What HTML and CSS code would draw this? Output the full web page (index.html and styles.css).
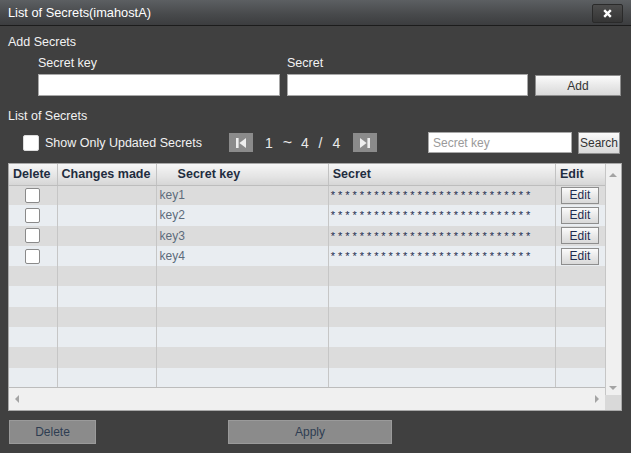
FILE: index.html
```html
<!DOCTYPE html>
<html lang="en">

<head>
    <meta charset="UTF-8">
    <title>List of Secrets</title>
    <link rel="stylesheet" href="styles.css">
</head>

<body>
    <div class="dialog">
        <div class="titlebar">
            <span class="title">List of Secrets(imahostA)</span>
            <button class="close" type="button">
                <svg width="9" height="9" viewBox="0 0 9 9"><path d="M1.2 1.2 L7.8 7.8 M7.8 1.2 L1.2 7.8" stroke="#fff" stroke-width="2.4" /></svg>
            </button>
        </div>

        <div class="content">
            <div class="section-title">Add Secrets</div>
            <div class="add-grid">
                <label class="field-label">Secret key</label>
                <label class="field-label">Secret</label>
                <span></span>
                <input class="text-input" type="text">
                <input class="text-input" type="text">
                <button class="light-btn add-btn" type="button">Add</button>
            </div>

            <div class="section-title list-title">List of Secrets</div>
            <div class="toolbar">
                <label class="show-updated">
                    <input class="chk big" type="checkbox">
                    <span>Show Only Updated Secrets</span>
                </label>
                <button class="page-btn" type="button">
                    <svg width="10" height="10" viewBox="0 0 10 10"><rect x="0" y="0" width="2.6" height="10" fill="#eee" /><polygon points="10,0 3.4,5 10,10" fill="#eee" /></svg>
                </button>
                <span class="page-num">1 <span class="tilde">~</span> 4 / 4</span>
                <button class="page-btn" type="button">
                    <svg width="10" height="10" viewBox="0 0 10 10"><polygon points="0,0 6.6,5 0,10" fill="#eee" /><rect x="7.4" y="0" width="2.6" height="10" fill="#eee" /></svg>
                </button>
                <div class="search">
                    <input class="text-input search-input" type="text" placeholder="Secret key">
                    <button class="light-btn search-btn" type="button">Search</button>
                </div>
            </div>

            <div class="grid-wrap">
                <div class="grid-body">
                    <table class="grid">
                        <colgroup>
                            <col style="width: 48px">
                            <col style="width: 99px">
                            <col style="width: 172px">
                            <col style="width: 227px">
                            <col style="width: 50px">
                        </colgroup>
                        <thead>
                            <tr>
                                <th>Delete</th>
                                <th>Changes made</th>
                                <th class="key-head">Secret key</th>
                                <th>Secret</th>
                                <th>Edit</th>
                            </tr>
                        </thead>
                        <tbody>
                            <tr>
                                <td class="c"><input class="chk" type="checkbox"></td>
                                <td></td>
                                <td class="key">key1</td>
                                <td class="secret">****************************</td>
                                <td><button class="light-btn edit-btn" type="button">Edit</button></td>
                            </tr>
                            <tr>
                                <td class="c"><input class="chk" type="checkbox"></td>
                                <td></td>
                                <td class="key">key2</td>
                                <td class="secret">****************************</td>
                                <td><button class="light-btn edit-btn" type="button">Edit</button></td>
                            </tr>
                            <tr>
                                <td class="c"><input class="chk" type="checkbox"></td>
                                <td></td>
                                <td class="key">key3</td>
                                <td class="secret">****************************</td>
                                <td><button class="light-btn edit-btn" type="button">Edit</button></td>
                            </tr>
                            <tr>
                                <td class="c"><input class="chk" type="checkbox"></td>
                                <td></td>
                                <td class="key">key4</td>
                                <td class="secret">****************************</td>
                                <td><button class="light-btn edit-btn" type="button">Edit</button></td>
                            </tr>
                            <tr><td></td><td></td><td></td><td></td><td></td></tr>
                            <tr><td></td><td></td><td></td><td></td><td></td></tr>
                            <tr><td></td><td></td><td></td><td></td><td></td></tr>
                            <tr><td></td><td></td><td></td><td></td><td></td></tr>
                            <tr><td></td><td></td><td></td><td></td><td></td></tr>
                            <tr><td></td><td></td><td></td><td></td><td></td></tr>
                        </tbody>
                    </table>
                </div>
                <div class="vscroll">
                    <span class="arrow up"></span>
                    <span class="arrow down"></span>
                </div>
                <div class="hscroll">
                    <span class="arrow left"></span>
                    <span class="arrow right"></span>
                </div>
                <div class="corner"></div>
            </div>

            <div class="footer">
                <button class="gray-btn delete-btn" type="button">Delete</button>
                <button class="gray-btn apply-btn" type="button">Apply</button>
            </div>
        </div>
    </div>
</body>

</html>
```

FILE: styles.css
```css
* {
    padding: 0;
    margin: 0;
    box-sizing: border-box;
}

body {
    background-color: #fff;
    font-family: "Liberation Sans", Arial, sans-serif;
    font-size: 12px;
}

button,
input {
    font-family: inherit;
    font-size: 12px;
}

.dialog {
    width: 631px;
    height: 453px;
    background-color: #404040;
    display: flex;
    flex-direction: column;
}

/* 标题栏 */
.titlebar {
    height: 26px;
    padding: 0 8px 0 8px;
    background: linear-gradient(#5c5f62, #47494b 60%, #3c3d3f);
    border-bottom: 1px solid #1c1c1c;
    display: flex;
    align-items: center;
    justify-content: space-between;
}

.title {
    color: #fff;
    font-size: 12.8px;
    margin-top: -1px;
}

.close {
    width: 31px;
    height: 19px;
    margin-top: 2px;
    border: 1px solid #2a2a2a;
    border-radius: 2px;
    background: linear-gradient(#4c4c4c, #353535);
    display: flex;
    align-items: center;
    justify-content: center;
}

.content {
    padding: 0 10px 0 8px;
    display: flex;
    flex-direction: column;
}

.section-title {
    height: 20px;
    line-height: 20px;
    margin-top: 6px;
    color: #f2f2f2;
    font-size: 12.5px;
}

.list-title {
    margin-top: 10px;
}

.add-grid {
    display: grid;
    grid-template-columns: 242px 241px 86px;
    grid-template-rows: 18px 22px;
    column-gap: 7px;
    row-gap: 2px;
    padding-left: 30px;
    margin-top: 2px;
}

.field-label {
    color: #f2f2f2;
    line-height: 18px;
    font-size: 12.5px;
}

.text-input {
    height: 22px;
    border: 1px solid #a8a8a8;
    background-color: #fff;
    padding: 0 4px;
    outline: none;
}

.light-btn {
    border: 1px solid #8e8e8e;
    background: linear-gradient(#fbfbfb, #e9e9e9 50%, #d9d9d9);
    color: #333;
}

.add-btn {
    height: 21px;
    margin-top: 1px;
}

/* 工具栏 */
.toolbar {
    height: 23px;
    margin-top: 5px;
    display: flex;
    align-items: center;
}

.show-updated {
    width: 221px;
    padding-left: 15px;
    display: flex;
    align-items: center;
    color: #f2f2f2;
    font-size: 12.5px;
}

.chk {
    appearance: none;
    -webkit-appearance: none;
    width: 15px;
    height: 15px;
    border: 1px solid #8a8a8a;
    border-radius: 2px;
    background-color: #fff;
    display: block;
}

.chk.big {
    width: 16px;
    height: 16px;
    margin-right: 6px;
    border-color: #ddd;
}

.page-btn {
    width: 24px;
    height: 19px;
    border: none;
    background-color: #8b8b8b;
    display: flex;
    align-items: center;
    justify-content: center;
}

.page-num {
    width: 100px;
    padding-left: 12px;
    color: #eaeaea;
    font-size: 14px;
    letter-spacing: 3px;
}

.tilde {
    font-size: 16px;
    letter-spacing: 2px;
}

.search {
    margin-left: auto;
    margin-right: 1px;
    display: flex;
    align-items: center;
    gap: 6px;
}

.search-input {
    width: 144px;
    height: 21px;
}

.search-input::placeholder {
    color: #9a9a9a;
}

.search-btn {
    width: 42px;
    height: 22px;
    padding: 0;
    margin-top: 1px;
}

/* 表格 */
.grid-wrap {
    width: 614px;
    height: 248px;
    margin-top: 9px;
    border: 1px solid #a9a9a9;
    background-color: #f0f0f0;
    display: grid;
    grid-template-columns: 596px 16px;
    grid-template-rows: 224px 7px 15px;
}

.grid-body {
    grid-column: 1;
    grid-row: 1;
    background-color: #e9edf1;
    border-bottom: 1px solid #bcbcbc;
    overflow: hidden;
}

.grid {
    width: 597px;
    border-collapse: collapse;
    table-layout: fixed;
}

.grid th {
    height: 21px;
    padding: 0 4px;
    text-align: left;
    font-weight: bold;
    font-size: 12.5px;
    color: #1f2d40;
    background: linear-gradient(#f6f6f6, #e4e4e4 60%, #d6d6d6);
    border-right: 1px solid #c2c2c2;
    border-bottom: 1px solid #bdbdbd;
}

.grid th.key-head {
    padding-left: 21px;
}

.grid td {
    height: 20.3px;
    padding: 0 3px;
    border-right: 1px solid #c6c6c6;
    white-space: nowrap;
    overflow: hidden;
}

.grid tbody tr:nth-child(odd) {
    background-color: #dcdcdc;
}

.grid tbody tr:nth-child(even) {
    background-color: #e9edf1;
}

.grid td.c .chk {
    margin-left: 13px;
}

.key {
    color: #5d6b7b;
}

.grid td.secret {
    padding-left: 2px;
    color: #1e2c4e;
    letter-spacing: 2.95px;
    font-size: 11px;
}

.edit-btn {
    width: 38px;
    height: 17px;
    margin-left: 2px;
    padding: 0;
    line-height: 14px;
    color: #1f2d50;
    display: block;
}

.vscroll {
    grid-column: 2;
    grid-row: 1 / 3;
    border-left: 1px solid #c6c6c6;
    background-color: #f0f0f0;
    position: relative;
}

.hscroll {
    grid-column: 1;
    grid-row: 2 / 4;
    background-color: #f0f0f0;
    position: relative;
}

.corner {
    grid-column: 2;
    grid-row: 3;
    background-color: #d9d9d9;
}

.arrow {
    position: absolute;
    width: 0;
    height: 0;
    border: 4px solid transparent;
}

.arrow.up {
    top: 5px;
    left: 3px;
    border-bottom-color: #a4a4a4;
}

.arrow.down {
    bottom: 1px;
    left: 3px;
    border-top-color: #a4a4a4;
}

.arrow.left {
    top: 7px;
    left: 2px;
    border-right-color: #a4a4a4;
}

.arrow.right {
    top: 7px;
    right: 2px;
    border-left-color: #a4a4a4;
}

/* 底部按钮 */
.footer {
    margin-top: 9px;
    display: flex;
}

.gray-btn {
    height: 24px;
    border: 1px solid #9a9a9a;
    background-color: #8b8b8b;
    color: #2e3d52;
}

.delete-btn {
    width: 87px;
    margin-left: 1px;
}

.apply-btn {
    width: 164px;
    margin-left: 132px;
}
```
